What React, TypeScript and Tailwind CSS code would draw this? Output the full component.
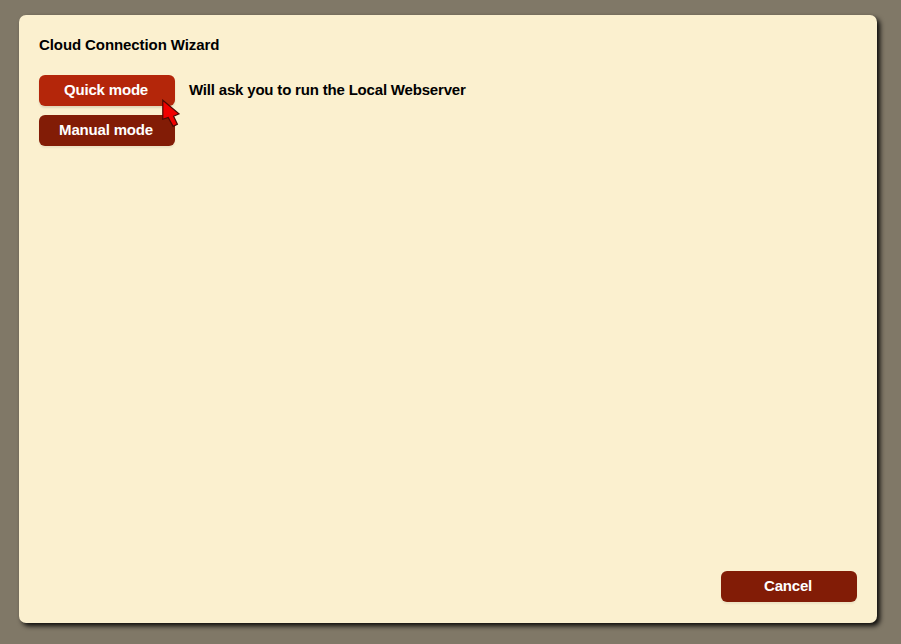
export default function App() {
  return (
    <div className="h-[644px] w-[901px] bg-[#807867] pt-[15px] pl-[19px] font-['Liberation_Sans',Arial,sans-serif] text-[15px] leading-[17px] font-bold text-black">
      <main className="relative flex h-[608px] w-[858px] flex-col rounded-[7px] bg-[#fbf0cf] px-5 pt-[21px] pb-[21px] shadow-[3px_3px_5px_rgba(0,0,0,0.9)]">
        <h1 className="tracking-[-0.09px]">Cloud Connection Wizard</h1>
        <div className="mt-[22px] flex items-center gap-[14px]">
          <button className="h-[31px] w-[136px] rounded-[6px] bg-[#b4260a] pr-[2px] pb-[2px] tracking-[-0.18px] text-white shadow-[0_2px_2px_rgba(0,0,0,0.11)]">Quick mode</button>
          <p className="pb-[2px] tracking-[-0.184px]">Will ask you to run the Local Webserver</p>
        </div>
        <button className="mt-[9px] h-[31px] w-[136px] rounded-[6px] bg-[#821c06] pr-[2px] pb-[2px] tracking-[-0.18px] text-white shadow-[0_2px_2px_rgba(0,0,0,0.06)]">Manual mode</button>
        <button className="mt-auto h-[31px] w-[136px] self-end rounded-[6px] bg-[#821c06] pr-[2px] pb-[2px] tracking-[-0.2px] text-white shadow-[0_2px_2px_rgba(0,0,0,0.06)]">Cancel</button>
        <svg className="absolute top-[84px] left-[143px]" width="20" height="30" viewBox="0 0 20 30">
          <path d="M0.8 1.2V20.2L6.2 18.4L11.1 27.4L15.4 25.3L11.6 17.2L17 14.8Z" fill="#f00000" stroke="#4a0804" strokeWidth="1.2" />
        </svg>
      </main>
    </div>
  );
}
